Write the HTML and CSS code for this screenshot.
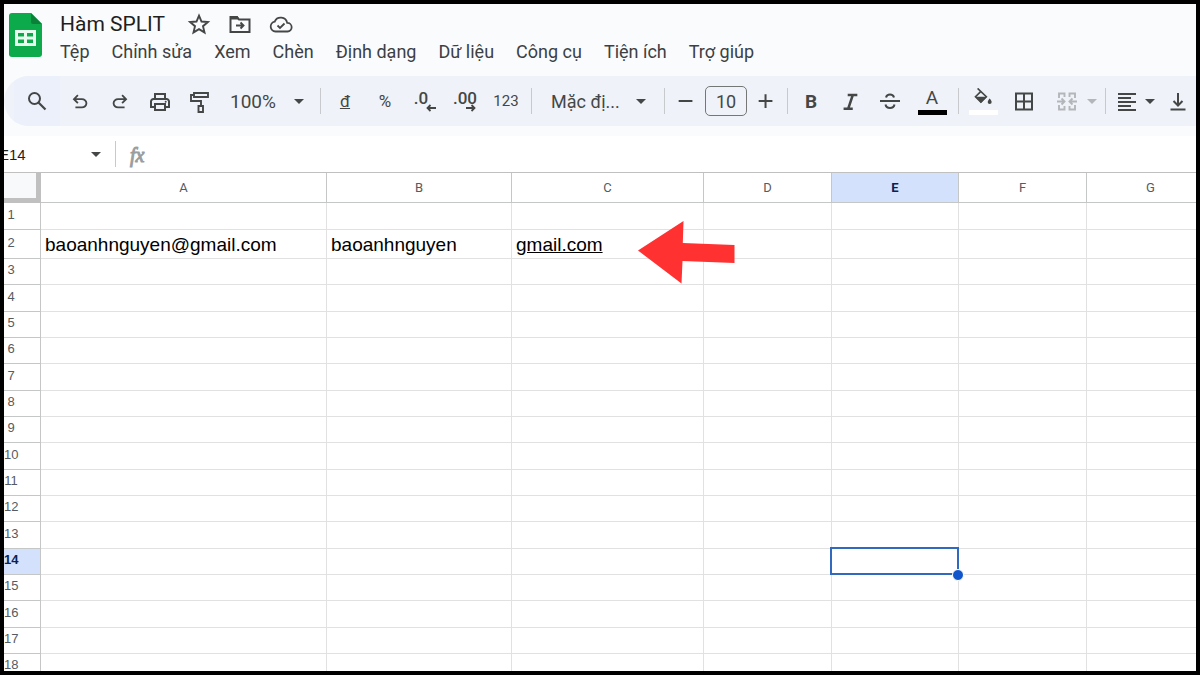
FILE: index.html
```html
<!DOCTYPE html>
<html lang="vi">
<head>
<meta charset="utf-8">
<title>Hàm SPLIT</title>
<link rel="stylesheet" href="styles.css">
</head>
<body>
<div class="app">
  <header class="top">
    <div class="brand">
      <svg class="logo" viewBox="0 0 33 44" aria-hidden="true">
        <path d="M3 0h19l11 11v30a3 3 0 0 1-3 3H3a3 3 0 0 1-3-3V3a3 3 0 0 1 3-3z" fill="#0caa4b"/>
        <path d="M22 0l11 11H24a2 2 0 0 1-2-2z" fill="#0a8038"/>
        <path d="M6 17h21v16H6zM9 20v3.500h6V20zm9 0v3.500h6V20zM9 26.500V30h6v-3.500zm9 0V30h6v-3.500z" fill="#e9fbef" fill-rule="evenodd"/>
      </svg>
      <div class="heading">
        <div class="title-row">
          <h1 class="title">Hàm SPLIT</h1>
          <button class="plain" aria-label="Gắn dấu sao"><svg class="icon" viewBox="0 0 24 24"><path d="M12 3.600l2.500 5.900 6.400.5-4.900 4.200 1.500 6.200-5.500-3.300-5.500 3.300L8 14.200 3.100 10l6.400-.5z" fill="none" stroke="currentColor" stroke-width="1.900"/></svg></button>
          <button class="plain" aria-label="Di chuyển"><svg class="icon" viewBox="0 0 24 24"><path d="M2.500 5h6.500l2 2.500h10.500V20h-19z" fill="none" stroke="currentColor" stroke-width="2"/><path d="M2 4h7.500l2 3.500H2z" fill="currentColor"/><path d="M8 13.500h7M12.500 10.500l3 3-3 3" fill="none" stroke="currentColor" stroke-width="1.900"/></svg></button>
          <button class="plain" aria-label="Trạng thái tài liệu"><svg class="icon" viewBox="0 0 24 24"><path d="M6.500 19.500a5 5 0 0 1-.8-9.900 6.600 6.600 0 0 1 12.500 1.300 4.300 4.300 0 0 1 .3 8.600z" fill="none" stroke="currentColor" stroke-width="1.800"/><path d="M8.500 13.500l2.500 2.500 4.500-4.500" fill="none" stroke="currentColor" stroke-width="1.800"/></svg></button>
        </div>
        <nav class="menu">
          <button class="plain">Tệp</button>
          <button class="plain">Chỉnh sửa</button>
          <button class="plain">Xem</button>
          <button class="plain">Chèn</button>
          <button class="plain">Định dạng</button>
          <button class="plain">Dữ liệu</button>
          <button class="plain">Công cụ</button>
          <button class="plain">Tiện ích</button>
          <button class="plain">Trợ giúp</button>
        </nav>
      </div>
    </div>
    <div class="toolbar" role="toolbar">
      <button class="tool search" aria-label="Tìm kiếm"><svg class="icon" viewBox="0 0 24 24"><circle cx="9.500" cy="9.500" r="5.500" fill="none" stroke="currentColor" stroke-width="2"/><path d="M13.500 13.500l7 7" stroke="currentColor" stroke-width="2.200"/></svg></button>
      <button class="tool" aria-label="Hoàn tác"><svg class="icon small" viewBox="0 0 24 24"><path d="M7 20v-2h7.100q1.575 0 2.737-1T18 14.500 16.838 12 14.100 11H7.800l2.600 2.600L9 15 4 10l5-5 1.400 1.400L7.800 9h6.300q2.425 0 4.163 1.575T20 14.500t-1.737 3.925T14.100 20z" fill="currentColor"/></svg></button>
      <button class="tool" aria-label="Làm lại"><svg class="icon small" viewBox="0 0 24 24"><path transform="matrix(-1 0 0 1 24 0)" d="M7 20v-2h7.100q1.575 0 2.737-1T18 14.500 16.838 12 14.100 11H7.800l2.600 2.600L9 15 4 10l5-5 1.400 1.400L7.800 9h6.300q2.425 0 4.163 1.575T20 14.500t-1.737 3.925T14.100 20z" fill="currentColor"/></svg></button>
      <button class="tool" aria-label="In"><svg class="icon" viewBox="0 0 24 24"><path d="M7 9V5h10v4M7 18H3v-5.500a2.500 2.500 0 0 1 2.500-2.500h13a2.500 2.500 0 0 1 2.500 2.500V18h-4M7 15h10v6H7z" fill="none" stroke="currentColor" stroke-width="2"/><circle cx="17.700" cy="12.800" r="1" fill="currentColor"/></svg></button>
      <button class="tool" aria-label="Sao chép định dạng"><svg class="icon" viewBox="0 0 24 24"><path d="M6 4h14v4H6zM6 6H3v6h10v5M10.500 17h4.500v6h-4.500z" fill="none" stroke="currentColor" stroke-width="1.900"/></svg></button>
      <button class="tool zoom">100%<span class="caret"></span></button>
      <span class="sep"></span>
      <button class="tool sign"><u>đ</u></button>
      <button class="tool sign">%</button>
      <button class="tool dec fewer" aria-label="Giảm số vị trí thập phân"><span>.0</span><svg class="step" viewBox="0 0 10 8"><path d="M10 4H1.500M4.500 1l-3 3 3 3" fill="none" stroke="currentColor" stroke-width="1.800"/></svg></button>
      <button class="tool dec" aria-label="Tăng số vị trí thập phân"><span>.00</span><svg class="step" viewBox="0 0 10 8"><path d="M0 4h8.500M5.500 1l3 3-3 3" fill="none" stroke="currentColor" stroke-width="1.800"/></svg></button>
      <button class="tool num">123</button>
      <span class="sep"></span>
      <button class="tool font">Mặc đị...<span class="caret"></span></button>
      <span class="sep"></span>
      <button class="tool adjust" aria-label="Giảm cỡ chữ"><svg class="icon" viewBox="0 0 24 24"><path d="M4 12h15" stroke="currentColor" stroke-width="2.200"/></svg></button>
      <input class="size" aria-label="Cỡ chữ" value="10">
      <button class="tool adjust" aria-label="Tăng cỡ chữ"><svg class="icon" viewBox="0 0 24 24"><path d="M4 12h15M11.500 4.500v15" stroke="currentColor" stroke-width="2.200"/></svg></button>
      <span class="sep"></span>
      <button class="tool bold">B</button>
      <button class="tool" aria-label="In nghiêng"><svg class="icon small" viewBox="0 0 24 24"><path d="M9.500 5.500H20M5 20.500h10M15 5.500l-5 15" fill="none" stroke="currentColor" stroke-width="2.800"/></svg></button>
      <button class="tool" aria-label="Gạch ngang"><svg class="icon" viewBox="0 0 24 24"><path d="M2 12h20M8 8.500C8.500 6.500 10 5.500 12 5.500s3.500 1 4 3M7.500 15.500c.5 2.300 2.200 3.500 4.500 3.500s4-1.200 4.500-3.500" fill="none" stroke="currentColor" stroke-width="2"/></svg></button>
      <button class="tool swatch ink" aria-label="Màu văn bản"><span class="glyph">A</span><span class="bar"></span></button>
      <span class="sep"></span>
      <button class="tool swatch fill" aria-label="Màu nền"><svg class="glyph" viewBox="0 0 24 24"><path d="M5.500 0.500l10.500 10-6.500 6.500-6.500-6.500L9.500 4" fill="none" stroke="currentColor" stroke-width="2"/><path d="M3 10.500h13.500L9.500 18z" fill="currentColor"/><path d="M20 12.500s2.400 2.700 2.400 4.200a2.400 2.400 0 0 1-4.800 0c0-1.500 2.400-4.200 2.400-4.200z" fill="currentColor"/></svg><span class="bar"></span></button>
      <button class="tool" aria-label="Đường viền"><svg class="icon" viewBox="0 0 24 24"><path d="M5 4.500h16v16H5zM13 4.500v16M5 12.500h16" fill="none" stroke="currentColor" stroke-width="2"/></svg></button>
      <button class="tool merge" aria-label="Hợp nhất ô" disabled><svg class="icon" viewBox="0 0 24 24"><path d="M9.500 8V4.500H4V9M4 16v4.500h5.500V17M14.500 8V4.500H20V9M20 16v4.500h-5.500V17M2 12.500h7M6.500 9.500l3 3-3 3M22 12.500h-7M17.500 9.500l-3 3 3 3" fill="none" stroke="currentColor" stroke-width="1.900"/></svg><span class="caret"></span></button>
      <span class="sep"></span>
      <button class="tool align" aria-label="Căn ngang"><svg class="icon" viewBox="0 0 24 24"><path d="M2 5h18M2 9h13M2 13h18M2 17h13M2 21h18" stroke="currentColor" stroke-width="1.900"/></svg><span class="caret"></span></button>
      <button class="tool valign" aria-label="Căn dọc"><svg class="icon" viewBox="0 0 24 24"><path d="M4.500 20.500h15M12 4v12.500M7.500 12l4.500 4.500 4.500-4.500" fill="none" stroke="currentColor" stroke-width="2"/></svg></button>
    </div>
  </header>

  <div class="formula">
    <input class="name" aria-label="Hộp tên" value="E14">
    <button class="plain name-open" aria-label="Dải ô được đặt tên"><span class="caret"></span></button>
    <span class="sep"></span>
    <label class="fx" for="fx-input">fx</label>
    <input class="fx-input" id="fx-input">
  </div>

  <main class="sheet">
    <table class="grid">
      <colgroup><col class="c-head"><col class="c-a"><col class="c-b"><col class="c-c"><col class="c-d"><col class="c-e"><col class="c-f"><col class="c-g"></colgroup>
      <thead>
        <tr><th class="corner"></th><th>A</th><th>B</th><th>C</th><th>D</th><th class="active">E</th><th>F</th><th>G</th></tr>
      </thead>
      <tbody>
        <tr><th>1</th><td></td><td></td><td></td><td></td><td></td><td></td><td></td></tr>
        <tr class="filled"><th>2</th><td>baoanhnguyen@gmail.com</td><td>baoanhnguyen</td><td><a class="link" href="#">gmail.com</a></td><td></td><td></td><td></td><td></td></tr>
        <tr><th>3</th><td></td><td></td><td></td><td></td><td></td><td></td><td></td></tr>
        <tr><th>4</th><td></td><td></td><td></td><td></td><td></td><td></td><td></td></tr>
        <tr><th>5</th><td></td><td></td><td></td><td></td><td></td><td></td><td></td></tr>
        <tr><th>6</th><td></td><td></td><td></td><td></td><td></td><td></td><td></td></tr>
        <tr><th>7</th><td></td><td></td><td></td><td></td><td></td><td></td><td></td></tr>
        <tr><th>8</th><td></td><td></td><td></td><td></td><td></td><td></td><td></td></tr>
        <tr><th>9</th><td></td><td></td><td></td><td></td><td></td><td></td><td></td></tr>
        <tr><th>10</th><td></td><td></td><td></td><td></td><td></td><td></td><td></td></tr>
        <tr><th>11</th><td></td><td></td><td></td><td></td><td></td><td></td><td></td></tr>
        <tr><th>12</th><td></td><td></td><td></td><td></td><td></td><td></td><td></td></tr>
        <tr><th>13</th><td></td><td></td><td></td><td></td><td></td><td></td><td></td></tr>
        <tr><th class="active">14</th><td></td><td></td><td></td><td></td><td class="selected"><span class="handle"></span></td><td></td><td></td></tr>
        <tr><th>15</th><td></td><td></td><td></td><td></td><td></td><td></td><td></td></tr>
        <tr><th>16</th><td></td><td></td><td></td><td></td><td></td><td></td><td></td></tr>
        <tr><th>17</th><td></td><td></td><td></td><td></td><td></td><td></td><td></td></tr>
        <tr><th>18</th><td></td><td></td><td></td><td></td><td></td><td></td><td></td></tr>
      </tbody>
    </table>
    <svg class="pointer" viewBox="0 0 97 63" aria-hidden="true"><path d="M0 29.500L45.500 0l-.7 22 51.700 2v18l-52-2-1 22.500z" fill="#ff3131"/></svg>
  </main>
</div>
</body>
</html>
```
FILE: styles.css
```css
* { box-sizing: border-box; }

body {
  margin: 0;
  font-family: Roboto, "Noto Sans", sans-serif;
  color: #1f1f1f;
}

.app {
  display: flex;
  flex-direction: column;
  height: 100vh;
  overflow: hidden;
  border: 4px solid #000;
  background: #fff;
}

button, input { font: inherit; color: inherit; border: 0; padding: 0; background: none; }
button { cursor: pointer; }

.icon { display: block; flex: none; width: 24px; height: 24px; }
.icon.small { width: 22px; height: 22px; }

.caret {
  flex: none;
  border: 5px solid transparent;
  border-top-color: currentColor;
  border-bottom: 0;
}

.top { flex: none; padding-bottom: 10px; background: #f9fbfd; }

.brand { display: flex; gap: 18px; height: 72px; padding: 4px 5px 0; }
.logo { flex: none; width: 33px; height: 44px; margin-top: 5px; }
.heading { display: flex; flex-direction: column; }
.title-row { display: flex; align-items: center; gap: 17px; height: 31px; color: #444746; }
.title { margin: 0 5px 0 0; font-size: 21px; font-weight: 400; line-height: 28px; color: #1f1f1f; white-space: nowrap; }

.menu { display: flex; gap: 22px; font-size: 18px; line-height: 26px; color: #3c4043; white-space: nowrap; }

.toolbar {
  display: flex;
  align-items: center;
  height: 50px;
  padding-left: 10px;
  overflow: hidden;
  border-radius: 25px 0 0 25px;
  background: #eff2f8;
  color: #444746;
}

.tool { display: flex; flex: none; align-items: center; justify-content: center; width: 40px; height: 50px; }
.search { width: 46px; background: #ecf0fa; }
.zoom { justify-content: space-between; width: 96px; padding: 0 12px 0 10px; font-size: 19px; }
.sep { flex: none; width: 1px; height: 26px; margin: 0 4px; background: #c7c9cc; }
.sign { font-size: 17px; }
.dec { position: relative; padding-bottom: 6px; font-size: 17px; font-weight: 500; }
.fewer { padding-right: 8px; }
.step { position: absolute; right: 9px; bottom: 14px; width: 10px; height: 8px; }
.num { width: 42px; font-size: 15px; }
.font { justify-content: space-between; width: 124px; padding: 0 14px 0 15px; font-size: 18px; }
.adjust { width: 34px; }
.adjust .icon { width: 22px; height: 22px; }
.size { flex: none; width: 42px; height: 30px; margin: 0 2px; border: 1px solid #747775; border-radius: 5px; text-align: center; font-size: 18px; }
.bold { width: 38px; font-size: 19px; font-weight: 700; }
.swatch { flex-direction: column; gap: 2px; }
.ink { width: 44px; }
.ink .glyph { font-size: 19px; line-height: 20px; }
.fill .glyph { width: 22px; height: 20px; }
.bar { width: 29px; height: 5px; background: #000; }
.fill .bar { background: #fff; }
.merge { justify-content: flex-start; gap: 8px; width: 58px; padding-left: 12px; color: #b4b6b9; }
.align { justify-content: flex-start; gap: 5px; width: 50px; padding-left: 6px; }
.valign { width: 36px; }

.formula { display: flex; flex: none; align-items: center; height: 36px; color: #444746; }
.name { width: 77px; padding-top: 1px; text-indent: -5px; font-family: "Liberation Sans", Arial, sans-serif; font-size: 15px; color: #1f1f1f; }
.name-open { display: flex; justify-content: center; width: 30px; }
.fx { padding: 2px 10px 0; font: italic 400 20px "Liberation Serif", serif; color: #9a9da0; -webkit-text-stroke: 1px #9a9da0; }
.fx-input { flex: 1; min-width: 0; font-size: 16px; }

.sheet { position: relative; flex: 1; min-height: 0; overflow: hidden; border-top: 1px solid #c0c0c0; }

.grid { width: 1211px; table-layout: fixed; border-collapse: separate; border-spacing: 0; font-family: "Liberation Sans", Arial, sans-serif; }
.c-head { width: 37px; }
.c-a { width: 286px; }
.c-b { width: 185px; }
.c-c { width: 192px; }
.c-d { width: 128px; }
.c-e { width: 127px; }
.c-f { width: 128px; }
.c-g { width: 128px; }

.grid th, .grid td { padding: 0; border: solid #e1e1e1; border-width: 0 1px 1px 0; }
.grid th { border-color: #c4c7c5; font-size: 13px; font-weight: 400; line-height: 16px; color: #575b5f; }
.grid thead th { height: 30px; font-family: Roboto, sans-serif; }
.grid tbody tr { height: 26px; }
.grid tbody tr:nth-child(3n+1) { height: 27px; }
.grid tbody .filled { height: 29px; }
.grid tbody th { padding: 0 22px 3px 0; }
.grid td { padding-left: 4px; font-size: 19px; line-height: 22px; color: #000; white-space: nowrap; }
.grid .filled td { padding-top: 2px; }

.grid .corner { border: solid #c0c0c0; border-width: 0 5px 5px 0; background: #f8f9fa; }
.grid .active { background: #d3e1fd; color: #0b2250; font-weight: 700; }
.link { color: inherit; }

.selected { position: relative; }
.selected::before { content: ""; position: absolute; inset: -2px -1px -1px -2px; border: 2px solid #3069bd; }
.handle { position: absolute; right: -6px; bottom: -7px; width: 12px; height: 12px; border: 1px solid #fff; border-radius: 50%; background: #1155cc; }

.pointer { position: absolute; left: 634px; top: 48px; width: 97px; height: 63px; }
```
